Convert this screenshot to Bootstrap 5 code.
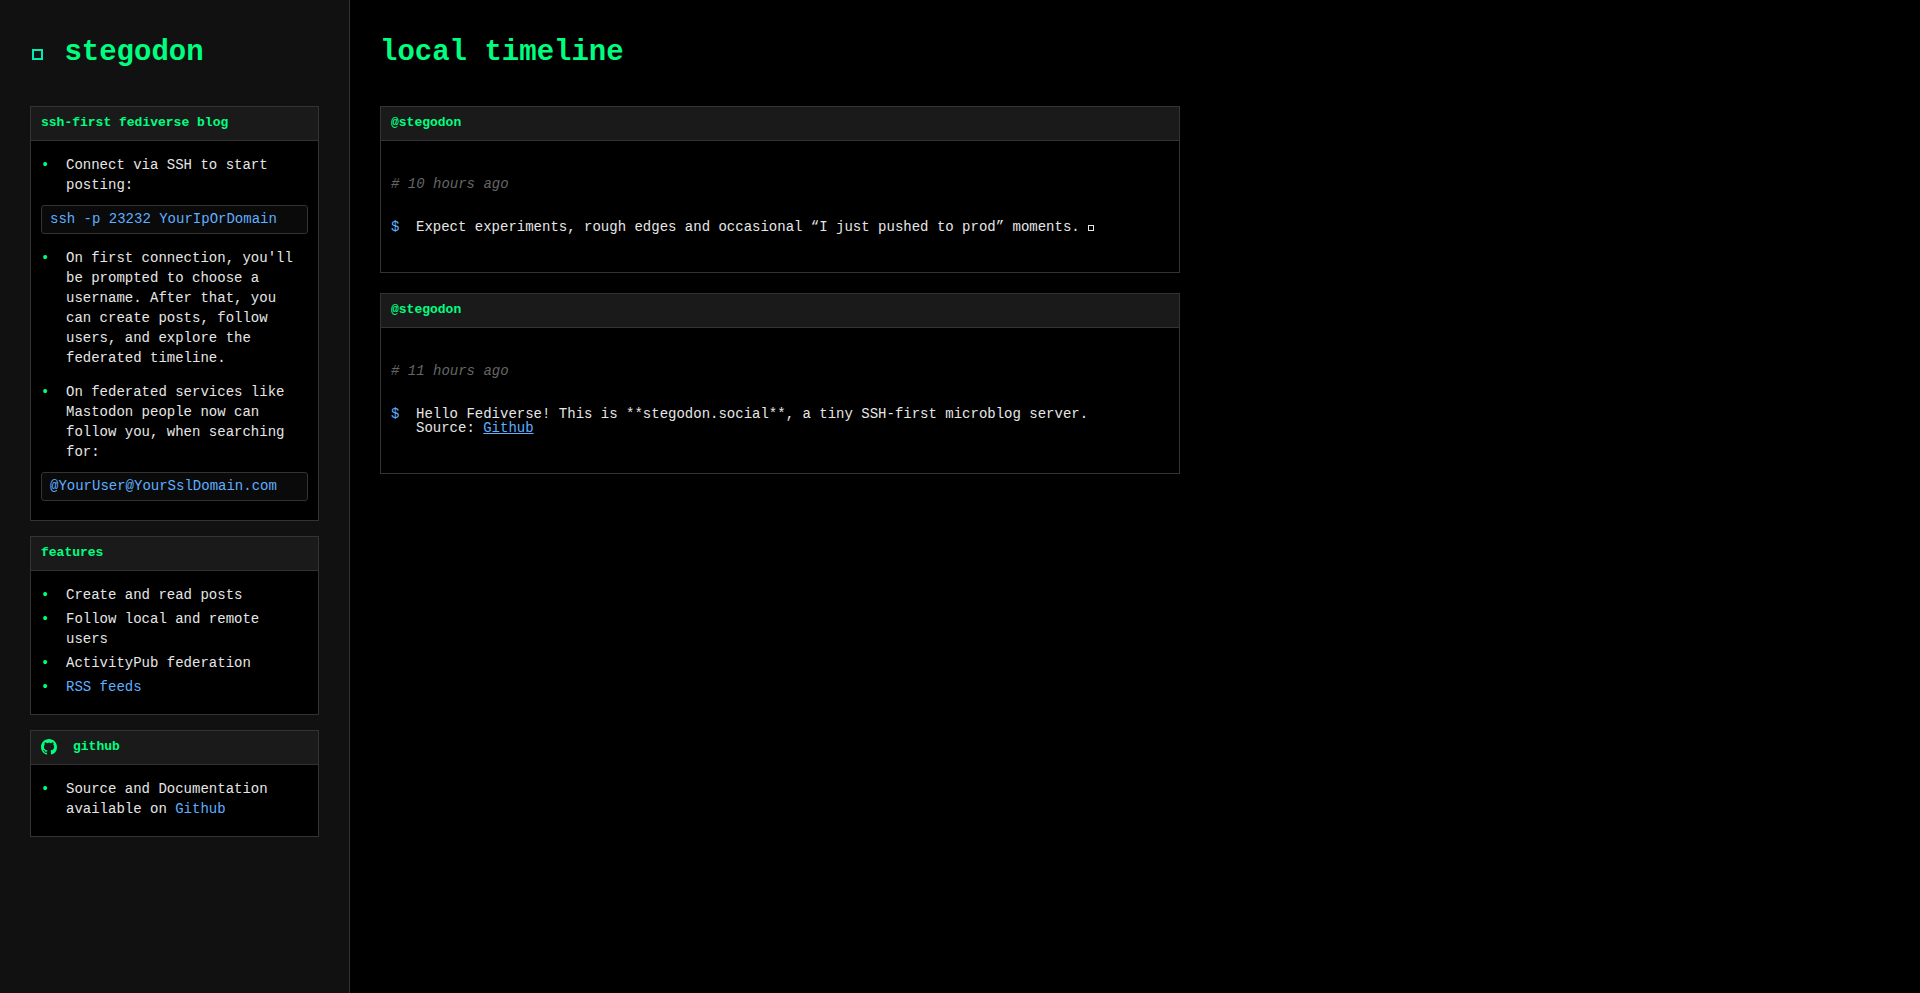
<!DOCTYPE html>
<html lang="en" data-bs-theme="dark">
<head>
<meta charset="utf-8">
<meta name="viewport" content="width=device-width, initial-scale=1">
<title>stegodon</title>
<link href="https://cdn.jsdelivr.net/npm/bootstrap@5.3.0/dist/css/bootstrap.min.css" rel="stylesheet">
<style>
  body {
    background: #000;
    color: #e6e6e6;
    font: 14px/20px "Liberation Mono", monospace;
  }
  a { color: #5fafff; }
  .page-title {
    color: #00ff7f;
    font-size: 29px;
    font-weight: 700;
    line-height: 46px;
    margin-bottom: 30px;
  }
  .pane { padding: 30px; }
  .sidebar {
    background: #111;
    border-right: 1px solid #333;
  }
  .panel-stack { gap: 15px; }
  .panel-box {
    background: #000;
    border-color: #333;
    border-radius: 0;
    color: inherit;
  }
  .panel-head {
    background: #1a1a1a;
    border-bottom: 1px solid #333;
    border-radius: 0 !important;
    color: #00ff7f;
    font-size: 13px;
    font-weight: 700;
    line-height: 20px;
    padding: 6px 10px 7px;
    margin: 0;
  }
  .panel-list { padding: 14px 10px 17px; gap: 4px; }
  .panel-list.steps { padding-bottom: 19px; gap: 14px; }
  .bullet-row::before {
    content: "•";
    color: #00ff7f;
    flex: 0 0 25px;
  }
  .snippet {
    background: #0a0a0a;
    border: 1px solid #333;
    border-radius: 3px;
    color: #5fafff;
    font: inherit;
    line-height: 19px;
    margin-top: 10px;
    padding: 4px 8px;
  }
  .timeline { max-width: 800px; gap: 20px; }
  .post { padding: 33px 10px 38px; }
  .post-time {
    color: #666;
    font-style: italic;
    margin-bottom: 26px;
  }
  .post-text { line-height: 14px; }
  .post-text::before {
    content: "$";
    color: #5fafff;
    flex: 0 0 25px;
  }
  /* hollow square glyph */
  .box-glyph {
    display: inline-block;
    width: 6px;
    height: 6px;
    border: 1px solid;
  }
  .box-glyph.title-glyph {
    width: 11px;
    height: 11px;
    border: 2px solid #00ecb0;
    margin: 0 4px 0 2px;
  }
  @media (min-width: 992px) {
    .sidebar { flex: 0 0 350px; }
  }
</style>
</head>
<body>
<div class="d-flex flex-column flex-lg-row min-vh-100">
  <aside class="sidebar pane">
    <h1 class="page-title"><span class="box-glyph title-glyph" aria-hidden="true"></span> stegodon</h1>
    <div class="d-flex flex-column panel-stack">
      <section class="card panel-box">
        <h2 class="card-header panel-head">ssh-first fediverse blog</h2>
        <ul class="list-unstyled d-flex flex-column mb-0 panel-list steps">
          <li>
            <div class="d-flex bullet-row"><span>Connect via SSH to start posting:</span></div>
            <code class="d-block snippet">ssh -p 23232 YourIpOrDomain</code>
          </li>
          <li class="d-flex bullet-row"><span>On first connection, you'll be prompted to choose a username. After that, you can create posts, follow users, and explore the federated timeline.</span></li>
          <li>
            <div class="d-flex bullet-row"><span>On federated services like Mastodon people now can follow you, when searching for:</span></div>
            <code class="d-block snippet">@YourUser@YourSslDomain.com</code>
          </li>
        </ul>
      </section>

      <section class="card panel-box">
        <h2 class="card-header panel-head">features</h2>
        <ul class="list-unstyled d-flex flex-column mb-0 panel-list">
          <li class="d-flex bullet-row"><span>Create and read posts</span></li>
          <li class="d-flex bullet-row"><span>Follow local and remote users</span></li>
          <li class="d-flex bullet-row"><span>ActivityPub federation</span></li>
          <li class="d-flex bullet-row"><a class="text-decoration-none" href="#rss">RSS feeds</a></li>
        </ul>
      </section>

      <section class="card panel-box">
        <h2 class="card-header panel-head d-flex align-items-center gap-3">
          <svg width="16" height="16" viewBox="0 0 16 16" fill="currentColor" aria-hidden="true"><path d="M8 0C3.58 0 0 3.58 0 8c0 3.54 2.29 6.53 5.47 7.59.4.07.55-.17.55-.38 0-.19-.01-.82-.01-1.49-2.01.37-2.53-.49-2.69-.94-.09-.23-.48-.94-.82-1.13-.28-.15-.68-.52-.01-.53.63-.01 1.08.58 1.23.82.72 1.21 1.87.87 2.33.66.07-.52.28-.87.51-1.07-1.78-.2-3.64-.89-3.64-3.95 0-.87.31-1.59.82-2.15-.08-.2-.36-1.02.08-2.12 0 0 .67-.21 2.2.82.64-.18 1.32-.27 2-.27s1.36.09 2 .27c1.53-1.04 2.2-.82 2.2-.82.44 1.1.16 1.92.08 2.12.51.56.82 1.27.82 2.15 0 3.07-1.87 3.75-3.65 3.95.29.25.54.73.54 1.48 0 1.07-.01 1.93-.01 2.2 0 .21.15.46.55.38A8.01 8.01 0 0 0 16 8c0-4.42-3.58-8-8-8z"/></svg>
          github
        </h2>
        <ul class="list-unstyled d-flex flex-column mb-0 panel-list">
          <li class="d-flex bullet-row"><span>Source and Documentation available on <a class="text-decoration-none" href="#github">Github</a></span></li>
        </ul>
      </section>
    </div>
  </aside>

  <main class="pane flex-grow-1">
    <h1 class="page-title">local timeline</h1>
    <div class="d-flex flex-column timeline">
      <article class="card panel-box">
        <h2 class="card-header panel-head">@stegodon</h2>
        <div class="post">
          <p class="post-time"># 10 hours ago</p>
          <p class="d-flex mb-0 post-text"><span>Expect experiments, rough edges and occasional “I just pushed to prod” moments. <span class="box-glyph" aria-hidden="true"></span></span></p>
        </div>
      </article>
      <article class="card panel-box">
        <h2 class="card-header panel-head">@stegodon</h2>
        <div class="post">
          <p class="post-time"># 11 hours ago</p>
          <p class="d-flex mb-0 post-text"><span>Hello Fediverse! This is **stegodon.social**, a tiny SSH-first microblog server.<br>Source: <a href="#source">Github</a></span></p>
        </div>
      </article>
    </div>
  </main>
</div>
<script src="https://cdn.jsdelivr.net/npm/bootstrap@5.3.0/dist/js/bootstrap.bundle.min.js"></script>
</body>
</html>
